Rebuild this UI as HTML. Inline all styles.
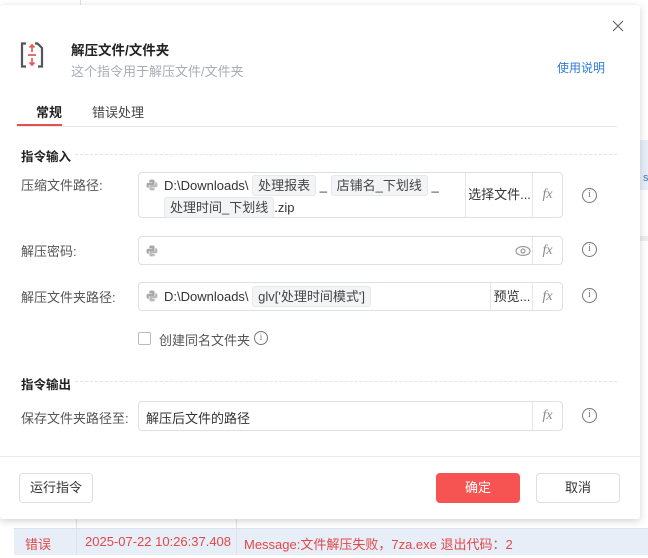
<!DOCTYPE html>
<html><head><meta charset="utf-8">
<style>
*{box-sizing:border-box;margin:0;padding:0}
body{width:648px;height:558px;overflow:hidden;background:#fff;font-family:"Liberation Sans","Noto Sans CJK SC",sans-serif;font-size:13px;color:#333;position:relative}
.abs{position:absolute}
.dlg{position:absolute;left:0;top:5px;width:640px;height:514px;background:#fff;box-shadow:0 2px 8px rgba(0,0,0,.18);border-radius:3px}
.lbl{position:absolute;left:21px;font-size:13px;color:#555}
.box{position:absolute;left:138px;width:425px;border:1px solid #dcdfe6;border-radius:4px;background:#fff}
.fx{position:absolute;right:0;top:0;bottom:0;width:30px;border-left:1px solid #e4e7ed;font-family:"Liberation Serif",serif;font-style:italic;color:#888;font-size:14px;display:flex;align-items:center;justify-content:center}
.chip{display:inline-block;background:#f3f4f6;border:1px solid #e6e8eb;border-radius:3px;padding:0 5px;line-height:19px;color:#444}
.info{position:absolute;left:582px;width:15px;height:15px;border:1.3px solid #777;border-radius:50%;font-size:10px;color:#777;text-align:center;line-height:12px;font-family:"Liberation Serif",serif}
.py{display:inline-block;width:12px;height:12px;vertical-align:-1px;margin-right:6px}
.sec{position:absolute;left:21px;font-weight:bold;font-size:12.5px;color:#222}
.dash{position:absolute;left:75px;width:542px;border-top:1px dashed #e2e4e8}
.btn{position:absolute;height:30px;border:1px solid #dcdfe6;border-radius:4px;background:#fff;text-align:center;line-height:28px;font-size:13px;color:#333}
</style></head><body>
<div class="abs" style="left:80px;top:0;width:1px;height:5px;background:#e0e0e0"></div>
<div class="abs" style="left:640px;top:140px;width:8px;height:50px;background:#e8eef8"></div>
<div class="abs" style="left:643px;top:172px;font-size:11px;color:#3a7bd5">s</div>
<div class="abs" style="left:640px;top:236px;width:8px;height:5px;background:#eee"></div>
<div class="abs" style="left:14px;top:528px;width:634px;height:27px;background:#e8eef8;border-top:1px solid #dde3ea"></div>
<div class="abs" style="left:76px;top:518px;width:1px;height:37px;background:#dde3ea"></div>
<div class="abs" style="left:236px;top:518px;width:1px;height:37px;background:#dde3ea"></div>
<div class="abs" style="left:25px;top:534px;color:#e04848;font-size:13px">错误</div>
<div class="abs" style="left:85px;top:534px;color:#e04848;font-size:13px">2025-07-22 10:26:37.408</div>
<div class="abs" style="left:244px;top:534px;color:#e04848;font-size:13px">Message:文件解压失败，7za.exe 退出代码：2</div>

<div class="dlg"></div>
<svg class="abs" style="left:612px;top:20px" width="12" height="12" viewBox="0 0 12 12"><path d="M1 1L11 11M11 1L1 11" stroke="#666" stroke-width="1.2"/></svg>
<svg class="abs" style="left:20px;top:42px" width="24" height="26" viewBox="0 0 24 26">
<path d="M6 1.5H2V24.5H6M15 1.5H17.5L22 6V24.5H18" fill="none" stroke="#555" stroke-width="2.2"/>
<path d="M12 3V10M9.5 5.5L12 3L14.5 5.5M12 16V23M9.5 20.5L12 23L14.5 20.5M8 13H16" fill="none" stroke="#e85a5a" stroke-width="1.7"/>
</svg>
<div class="abs" style="left:71px;top:39px;font-size:13.5px;font-weight:bold;color:#222">解压文件/文件夹</div>
<div class="abs" style="left:71px;top:61px;font-size:13px;color:#a8adb5">这个指令用于解压文件/文件夹</div>
<div class="abs" style="left:557px;top:59px;font-size:12px;color:#2f7bd9">使用说明</div>
<div class="abs" style="left:36px;top:102px;font-size:13px;font-weight:bold;color:#222">常规</div>
<div class="abs" style="left:92px;top:102px;font-size:13px;color:#444">错误处理</div>
<div class="abs" style="left:17px;top:126px;width:600px;height:1px;background:#e8e8e8"></div>
<div class="abs" style="left:17px;top:124px;width:45px;height:2px;background:#e25050"></div>

<div class="sec" style="top:146px">指令输入</div>
<div class="dash" style="top:154px"></div>

<div class="lbl" style="top:175px">压缩文件路径:</div>
<div class="box" style="top:172px;height:46px">
 <div class="abs" style="left:7px;top:2px;width:320px;line-height:22px">
  <svg class="py" viewBox="0 0 12 12"><path d="M6 0.5C3 0.5 3.3 1.8 3.3 1.8V3.2H6.2V3.7H2.1S0.5 3.5 0.5 6.2 1.9 8.8 1.9 8.8H2.8V7.5S2.7 6 4.3 6H7.1S8.6 6 8.6 4.6V2C8.6 2 8.8 0.5 6 0.5Z" fill="#a8a8a8"/><path d="M6 11.5C9 11.5 8.7 10.2 8.7 10.2V8.8H5.8V8.3H9.9S11.5 8.5 11.5 5.8 10.1 3.2 10.1 3.2H9.2V4.5S9.3 6 7.7 6H4.9S3.4 6 3.4 7.4V10C3.4 10 3.2 11.5 6 11.5Z" fill="#bbb"/></svg>D:\Downloads\ <span class="chip">处理报表</span> _ <span class="chip">店铺名_下划线</span> _<br>
  <span style="margin-left:18px" class="chip">处理时间_下划线</span>.zip
 </div>
 <div class="abs" style="left:326px;top:0;bottom:0;width:68px;border-left:1px solid #e4e7ed;line-height:44px;text-align:center;color:#333">选择文件...</div>
 <div class="fx">fx</div>
</div>
<div class="info" style="top:188px">i</div>

<div class="lbl" style="top:241px">解压密码:</div>
<div class="box" style="top:236px;height:29px">
 <div class="abs" style="left:7px;top:7px"><svg class="py" viewBox="0 0 12 12"><path d="M6 0.5C3 0.5 3.3 1.8 3.3 1.8V3.2H6.2V3.7H2.1S0.5 3.5 0.5 6.2 1.9 8.8 1.9 8.8H2.8V7.5S2.7 6 4.3 6H7.1S8.6 6 8.6 4.6V2C8.6 2 8.8 0.5 6 0.5Z" fill="#a8a8a8"/><path d="M6 11.5C9 11.5 8.7 10.2 8.7 10.2V8.8H5.8V8.3H9.9S11.5 8.5 11.5 5.8 10.1 3.2 10.1 3.2H9.2V4.5S9.3 6 7.7 6H4.9S3.4 6 3.4 7.4V10C3.4 10 3.2 11.5 6 11.5Z" fill="#bbb"/></svg></div>
 <svg class="abs" style="left:376px;top:8px" width="16" height="12" viewBox="0 0 16 12"><ellipse cx="8" cy="6" rx="7" ry="4.5" fill="none" stroke="#999" stroke-width="1.2"/><circle cx="8" cy="6" r="2" fill="none" stroke="#999" stroke-width="1.2"/></svg>
 <div class="fx">fx</div>
</div>
<div class="info" style="top:242px">i</div>

<div class="lbl" style="top:287px">解压文件夹路径:</div>
<div class="box" style="top:282px;height:29px">
 <div class="abs" style="left:7px;top:3px;line-height:20px"><svg class="py" viewBox="0 0 12 12"><path d="M6 0.5C3 0.5 3.3 1.8 3.3 1.8V3.2H6.2V3.7H2.1S0.5 3.5 0.5 6.2 1.9 8.8 1.9 8.8H2.8V7.5S2.7 6 4.3 6H7.1S8.6 6 8.6 4.6V2C8.6 2 8.8 0.5 6 0.5Z" fill="#a8a8a8"/><path d="M6 11.5C9 11.5 8.7 10.2 8.7 10.2V8.8H5.8V8.3H9.9S11.5 8.5 11.5 5.8 10.1 3.2 10.1 3.2H9.2V4.5S9.3 6 7.7 6H4.9S3.4 6 3.4 7.4V10C3.4 10 3.2 11.5 6 11.5Z" fill="#bbb"/></svg>D:\Downloads\ <span class="chip">glv['处理时间模式']</span></div>
 <div class="abs" style="left:351px;top:0;bottom:0;width:43px;border-left:1px solid #e4e7ed;line-height:27px;text-align:center">预览...</div>
 <div class="fx">fx</div>
</div>
<div class="info" style="top:288px">i</div>

<div class="abs" style="left:138px;top:332px;width:13px;height:13px;border:1px solid #bbb;border-radius:2px"></div>
<div class="abs" style="left:159px;top:330px;color:#555">创建同名文件夹</div>
<div class="abs" style="left:254px;top:331px;width:14px;height:14px;border:1.2px solid #777;border-radius:50%;font-size:9px;text-align:center;line-height:11px;color:#777;font-family:'Liberation Serif',serif">i</div>

<div class="sec" style="top:374px">指令输出</div>
<div class="dash" style="top:381px"></div>

<div class="lbl" style="top:408px">保存文件夹路径至:</div>
<div class="box" style="top:401px;height:30px">
 <div class="abs" style="left:7px;top:6px;color:#333">解压后文件的路径</div>
 <div class="fx">fx</div>
</div>
<div class="info" style="top:408px">i</div>

<div class="abs" style="left:0;top:456px;width:640px;height:1px;background:#ebebeb"></div>
<div class="btn" style="left:19px;top:473px;width:74px">运行指令</div>
<div class="btn" style="left:436px;top:473px;width:84px;background:#f65353;border-color:#f65353;color:#fff">确定</div>
<div class="btn" style="left:536px;top:473px;width:84px">取消</div>
</body></html>
